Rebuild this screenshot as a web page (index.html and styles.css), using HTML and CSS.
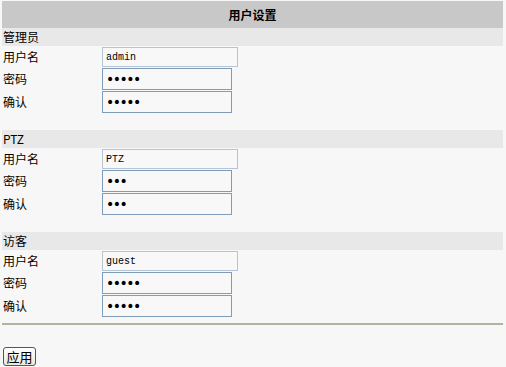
FILE: index.html
```html
<!DOCTYPE html>
<html lang="zh-CN">
<head>
    <meta charset="UTF-8">
    <title>用户设置</title>
    <link rel="stylesheet" href="styles.css">
</head>
<body>
    <div class="panel">
        <div class="title">用户设置</div>

        <div class="group">
            <div class="group-head">管理员</div>
            <div class="row"><span class="label">用户名</span><input class="name" type="text" value="admin"></div>
            <div class="row"><span class="label">密码</span><input class="pass" type="password" value="admin"></div>
            <div class="row"><span class="label">确认</span><input class="pass" type="password" value="admin"></div>
        </div>

        <div class="group">
            <div class="group-head">PTZ</div>
            <div class="row"><span class="label">用户名</span><input class="name" type="text" value="PTZ"></div>
            <div class="row"><span class="label">密码</span><input class="pass" type="password" value="ptz"></div>
            <div class="row"><span class="label">确认</span><input class="pass" type="password" value="ptz"></div>
        </div>

        <div class="group last">
            <div class="group-head">访客</div>
            <div class="row"><span class="label">用户名</span><input class="name" type="text" value="guest"></div>
            <div class="row"><span class="label">密码</span><input class="pass" type="password" value="guest"></div>
            <div class="row"><span class="label">确认</span><input class="pass" type="password" value="guest"></div>
        </div>

        <div class="rule"></div>

        <button class="apply" type="button">应用</button>
    </div>
</body>
</html>
```

FILE: styles.css
```css
body {
    margin: 0;
    background: #f7f7f7;
    font-family: "Noto Sans CJK SC", "Liberation Sans", sans-serif;
    font-size: 12px;
    color: #000;
}

.panel {
    width: 501px;
    padding: 1px 0 0 2px;
}

.title {
    height: 27px;
    line-height: 27px;
    background: #c8c8c8;
    text-align: center;
    font-weight: bold;
}

.group {
    margin-bottom: 17px;
}

.group.last {
    margin-bottom: 6px;
}

.group-head {
    height: 18px;
    line-height: 18px;
    background: #e8e8e8;
    padding-left: 1px;
}

.row {
    display: flex;
    align-items: center;
    padding-top: 1px;
    line-height: 16px;
}

.label {
    box-sizing: border-box;
    width: 100px;
    padding-left: 1px;
}

.row input {
    box-sizing: border-box;
    margin: 0;
    padding: 0 3px;
    background: #f8f8f8;
    color: #000;
    outline: none;
}

.name {
    width: 136px;
    height: 20px;
    border: 1px solid #b5c5d6;
    font-family: "Liberation Mono", monospace;
    font-size: 10px;
}

.pass {
    width: 130px;
    height: 22px;
    border: 1px solid #7f9db9;
    font-family: "DejaVu Sans", sans-serif;
    font-size: 14px;
    letter-spacing: -1.5px;
}

.rule {
    height: 2px;
    background: #b4b19f;
    margin-bottom: 22px;
}

.apply {
    display: block;
    margin-left: 1px;
    width: 33px;
    height: 19px;
    padding: 0;
    border: 1px solid #2c5d93;
    border-radius: 3px;
    background: linear-gradient(#ffffff, #ece9d8);
    font-family: "Noto Sans CJK SC", sans-serif;
    font-size: 13px;
    line-height: 15px;
    color: #000;
}
```
